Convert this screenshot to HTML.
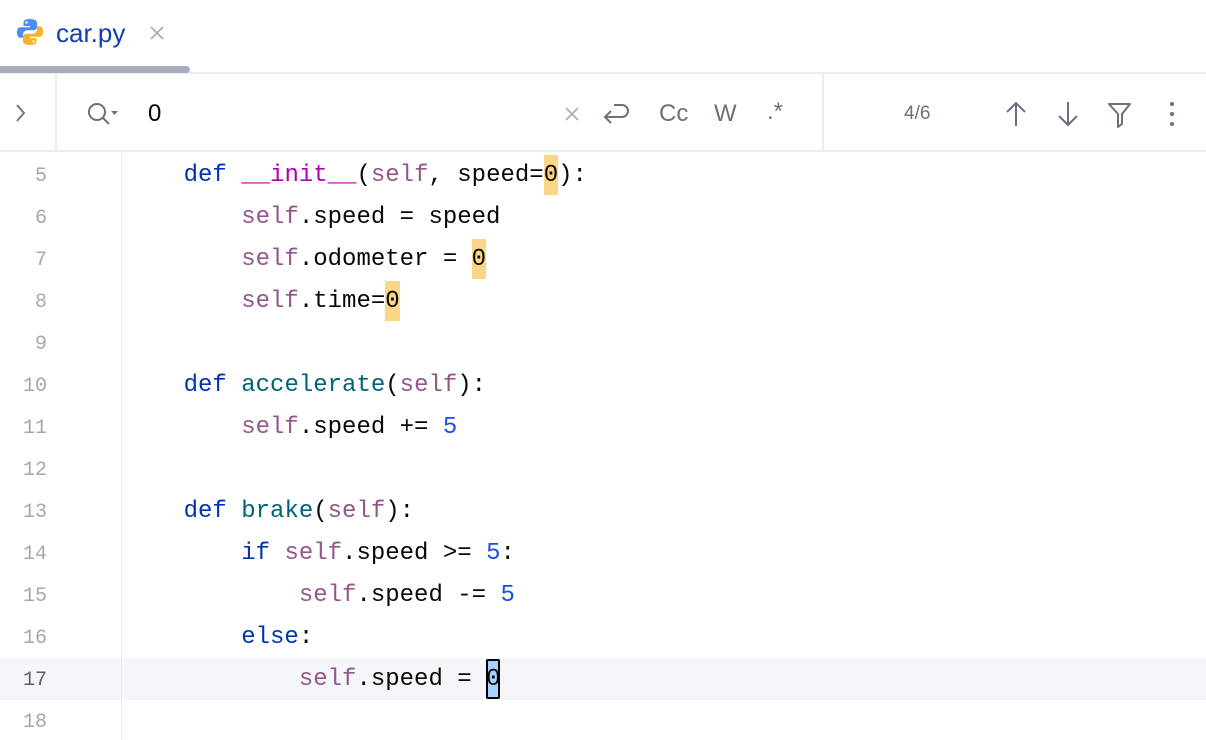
<!DOCTYPE html>
<html><head><meta charset="utf-8"><style>
*{margin:0;padding:0;box-sizing:border-box}
body{width:1206px;height:740px;overflow:hidden;background:#fff;font-family:"Liberation Sans",sans-serif;position:relative}
.abs{position:absolute}
.code{font-family:"Liberation Mono",monospace;font-size:24px;white-space:pre;color:#080808}
.ln{position:absolute;left:0;width:47px;text-align:right;font-family:"Liberation Mono",monospace;font-size:20px;color:#a3a7b3}
.k{color:#0033b3}.m{color:#b200b2}.s{color:#94558d}.f{color:#00627a}.n{color:#1750eb}
.h{background:#fcd687;display:inline-block;height:40px;vertical-align:top}
.ic{color:#6c707e}
</style></head><body>
<!-- tab -->
<svg class="abs" style="left:16px;top:18px" width="28" height="28" viewBox="0 0 28 28">
<path d="M13.5 1c-5 0-6 1.8-6 4v3h6.5v1.2H4.5C2 9.2 1 11.5 1 14.5s1.2 5.3 3.5 5.3h2.5v-3.2c0-2.4 2-4.3 4.4-4.3h6.2c2 0 3.5-1.6 3.5-3.5V5c0-2.2-2.2-4-7.6-4z" fill="#4c8cf5"/>
<circle cx="10.5" cy="4.5" r="1.2" fill="#fff"/>
<path d="M14.5 27c5 0 6-1.8 6-4v-3h-6.5v-1.2h9.5c2.5 0 3.5-2.3 3.5-5.3s-1.2-5.3-3.5-5.3h-2.5v3.2c0 2.4-2 4.3-4.4 4.3h-6.2c-2 0-3.5 1.6-3.5 3.5V23c0 2.2 2.2 4 7.6 4z" fill="#f7b22c"/>
<circle cx="17.5" cy="23.5" r="1.2" fill="#fff"/>
</svg>
<div class="abs" style="left:56px;top:18px;font-size:26px;color:#0f3fb0">car.py</div>
<svg class="abs" style="left:149px;top:25px" width="16" height="16"><path d="M2 2L14 14M14 2L2 14" stroke="#a8adbd" stroke-width="1.8"/></svg>
<div class="abs" style="left:0;top:72px;width:1206px;height:2px;background:#ebecf0"></div>
<div class="abs" style="left:-4px;top:66px;width:194px;height:7px;background:#a8adbd;border-radius:4px"></div>
<!-- search bar -->
<div class="abs" style="left:55px;top:74px;width:2px;height:76px;background:#ebecf0"></div>
<div class="abs" style="left:822px;top:74px;width:2px;height:76px;background:#ebecf0"></div>
<div class="abs" style="left:0;top:150px;width:1206px;height:2px;background:#ebecf0"></div>
<svg class="abs" style="left:14px;top:103px" width="14" height="20"><path d="M3 2l7 8-7 8" fill="none" stroke="#6c707e" stroke-width="1.8"/></svg>
<svg class="abs" style="left:86px;top:100px" width="36" height="28"><circle cx="11" cy="12" r="8" fill="none" stroke="#6c707e" stroke-width="2"/><path d="M17 18l6 6" stroke="#6c707e" stroke-width="2"/><path d="M25 11h7l-3.5 4z" fill="#6c707e"/></svg>
<div class="abs" style="left:148px;top:100px;font-size:24px;color:#000">0</div>
<svg class="abs" style="left:563px;top:105px" width="18" height="18"><path d="M3 3L15 15M15 3L3 15" stroke="#a8adbd" stroke-width="1.8"/></svg>
<svg class="abs" style="left:600px;top:100px" width="34" height="30"><path d="M14 5h8a6 6 0 0 1 0 12H5M11 11l-6 6 6 6" fill="none" stroke="#6c707e" stroke-width="2"/></svg>
<div class="abs ic" style="left:659px;top:100px;font-size:24px">Cc</div>
<div class="abs ic" style="left:714px;top:100px;font-size:24px">W</div>
<div class="abs ic" style="left:767px;top:98px;font-size:24px">.*</div>
<div class="abs ic" style="left:904px;top:103px;font-size:19px">4/6</div>
<svg class="abs" style="left:1004px;top:100px" width="24" height="28"><path d="M12 3v23M3 12l9-9 9 9" fill="none" stroke="#6c707e" stroke-width="2"/></svg>
<svg class="abs" style="left:1056px;top:100px" width="24" height="28"><path d="M12 2v23M3 16l9 9 9-9" fill="none" stroke="#6c707e" stroke-width="2"/></svg>
<svg class="abs" style="left:1106px;top:100px" width="28" height="28"><path d="M3 4h21l-8 10v10l-4 3V14z" fill="none" stroke="#6c707e" stroke-width="2" stroke-linejoin="round"/></svg>
<svg class="abs" style="left:1166px;top:100px" width="12" height="28"><circle cx="6" cy="4" r="2" fill="#6c707e"/><circle cx="6" cy="14" r="2" fill="#6c707e"/><circle cx="6" cy="24" r="2" fill="#6c707e"/></svg>
<!-- editor -->
<div class="abs" style="left:0;top:658px;width:1206px;height:42px;background:#f5f6fa"></div>
<div class="abs" style="left:121px;top:152px;width:1px;height:588px;background:#ebecf0"></div>
<div class="ln" style="top:165px">5</div>
<div class="ln" style="top:207px">6</div>
<div class="ln" style="top:249px">7</div>
<div class="ln" style="top:291px">8</div>
<div class="ln" style="top:333px">9</div>
<div class="ln" style="top:375px">10</div>
<div class="ln" style="top:417px">11</div>
<div class="ln" style="top:459px">12</div>
<div class="ln" style="top:501px">13</div>
<div class="ln" style="top:543px">14</div>
<div class="ln" style="top:585px">15</div>
<div class="ln" style="top:627px">16</div>
<div class="ln" style="top:669px;color:#5a5d6b">17</div>
<div class="ln" style="top:711px">18</div>
<div class="abs code" style="left:126px;top:155px;line-height:42px">    <span class="k">def</span> <span class="m">__init__</span>(<span class="s">self</span>, speed=<span class="h">0</span>):
        <span class="s">self</span>.speed = speed
        <span class="s">self</span>.odometer = <span class="h">0</span>
        <span class="s">self</span>.time=<span class="h">0</span>

    <span class="k">def</span> <span class="f">accelerate</span>(<span class="s">self</span>):
        <span class="s">self</span>.speed += <span class="n">5</span>

    <span class="k">def</span> <span class="f">brake</span>(<span class="s">self</span>):
        <span class="k">if</span> <span class="s">self</span>.speed &gt;= <span class="n">5</span>:
            <span class="s">self</span>.speed -= <span class="n">5</span>
        <span class="k">else</span>:
            <span class="s">self</span>.speed = <span style="background:#a6d2ff;outline:2px solid #000;outline-offset:-2px;border-radius:2px;display:inline-block;height:40px;vertical-align:top">0</span>
</div>
</body></html>
